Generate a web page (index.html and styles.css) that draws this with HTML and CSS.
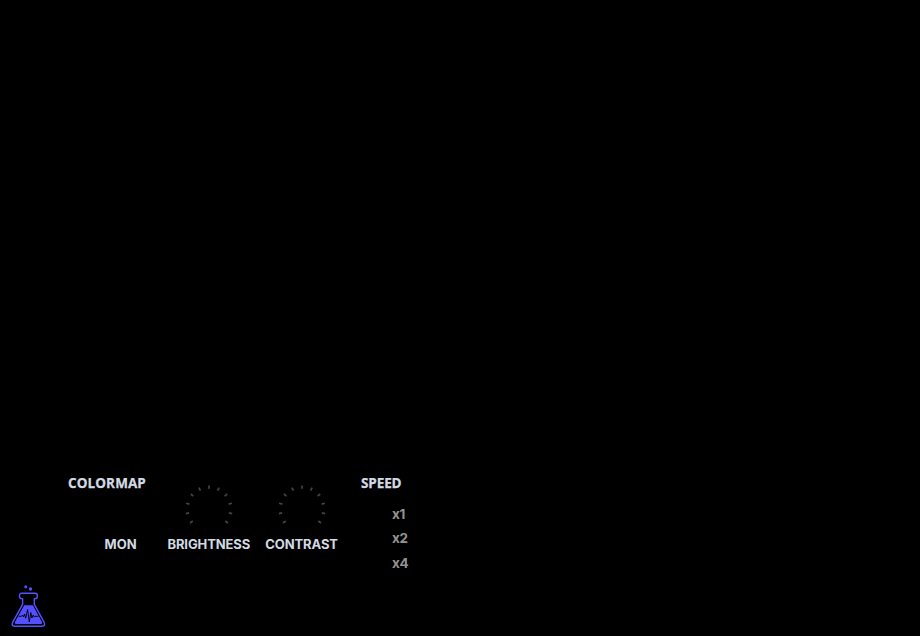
FILE: index.html
```
<!DOCTYPE html>
<html lang="en">
<head>
<meta charset="utf-8">
<title>Spectrogram</title>
<link rel="stylesheet" href="styles.css">
</head>
<body>
<main class="display"></main>
<section class="controls">
  <div class="colormap">
    <h2 class="heading">COLORMAP</h2>
    <span class="label mon">MON</span>
  </div>
  <div class="knob brightness">
    <svg class="dial" viewBox="-24 -24 48 48"><g id="ticks" stroke="#444" stroke-width="1.7">
      <path d="M0-23.6v3.4" transform="rotate(-126.5)"/><path d="M0-23.6v3.4" transform="rotate(-101.2)"/><path d="M0-23.6v3.4" transform="rotate(-75.9)"/><path d="M0-23.6v3.4" transform="rotate(-50.6)"/><path d="M0-23.6v3.4" transform="rotate(-25.3)"/><path d="M0-23.6v3.4"/><path d="M0-23.6v3.4" transform="rotate(25.3)"/><path d="M0-23.6v3.4" transform="rotate(50.6)"/><path d="M0-23.6v3.4" transform="rotate(75.9)"/><path d="M0-23.6v3.4" transform="rotate(101.2)"/><path d="M0-23.6v3.4" transform="rotate(126.5)"/>
    </g></svg>
    <span class="label">BRIGHTNESS</span>
  </div>
  <div class="knob contrast">
    <svg class="dial" viewBox="-24 -24 48 48"><use href="#ticks"/></svg>
    <span class="label">CONTRAST</span>
  </div>
  <div class="speed">
    <h2 class="heading speed-title">SPEED</h2>
    <ul class="rates"><li>x1</li><li>x2</li><li>x4</li></ul>
  </div>
</section>
<footer class="footer">
  <svg class="logo" viewBox="0 0 36 44" fill="none" stroke="#5550ff" stroke-width="1.4" stroke-linejoin="round" stroke-linecap="round">
    <circle cx="14.7" cy="2.8" r="1.5" fill="#5550ff" stroke="none"/>
    <circle cx="19.5" cy="5" r="1.7" fill="#5550ff" stroke="none"/>
    <path d="M11.6 14.6H10.4Q8.5 14.6 8.5 11.9T10.6 9.3H24.2Q26.4 9.3 26.4 11.9T24.4 14.6H23.3V20.4L32.9 37.9Q35 42.2 31 42.2H3.8Q-.2 42.2 1.9 37.9L11.6 20.4Z"/>
    <path d="M13.2 21.2H21.9L30.7 37.4Q31.8 39.9 29.8 39.9H5Q3.2 39.9 4.2 37.4Z" fill="#5550ff" stroke="none"/>
    <path d="M8 32.3H10.5L11.5 31L12.5 33L13.6 30L14.7 34.2L16.6 25.5L18.3 38L19.8 28.5L20.9 34L22.2 31L23.2 33L24 32.3H27" stroke="#000" stroke-width=".9"/>
  </svg>
</footer>
</body>
</html>
```

FILE: styles.css
```
* { box-sizing: border-box; margin: 0; padding: 0; }
body {
  height: 636px;
  display: flex;
  flex-direction: column;
  overflow: hidden;
  background: #000;
  color: #d3dae3;
  font-family: Inter, sans-serif;
}
.display { flex: 1; }
.controls {
  height: 108px;
  display: flex;
  padding-left: 68px;
}
.heading {
  font: 700 13.5px/20px "Open Sans", sans-serif;
  letter-spacing: .1px;
  -webkit-text-stroke: .25px currentColor;
  white-space: nowrap;
}
.speed-title { letter-spacing: -.1px; }
.colormap {
  width: 92px;
  display: flex;
  flex-direction: column;
}
.label {
  font-size: 13px;
  font-weight: 700;
  line-height: 20px;
  letter-spacing: -.1px;
  white-space: nowrap;
}
.mon { margin: 41px 0 0 36.4px; letter-spacing: .15px; }
.knob {
  display: flex;
  flex-direction: column;
  align-items: center;
  padding-top: 12px;
}
.dial {
  width: 48px;
  height: 48px;
  margin-bottom: 1px;
}
.brightness { width: 97.6px; }
.contrast { width: 87.4px; padding-left: .6px; }
.speed { padding-left: 16px; }
.rates {
  margin: 9px 0 0 31px;
  list-style: none;
  color: #929292;
  font-size: 13.5px;
  font-weight: 700;
  line-height: 24.3px;
  letter-spacing: -.3px;
}
.footer {
  height: 55px;
  padding: 3px 0 0 11px;
}
.logo { width: 36px; height: 44px; display: block; }
```
